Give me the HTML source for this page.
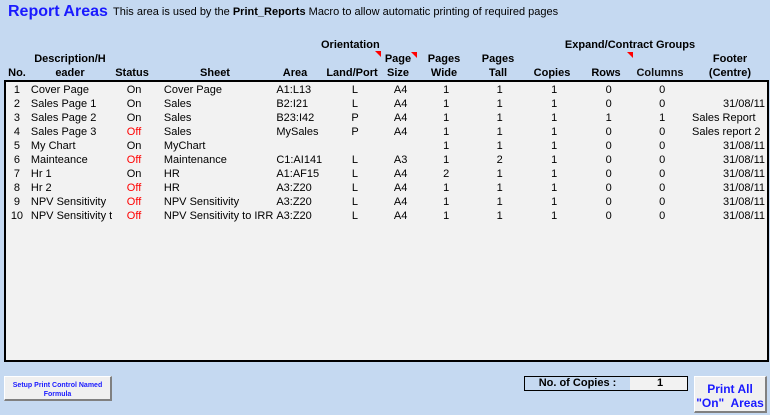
<!DOCTYPE html>
<html><head><style>
body{margin:0;width:770px;height:415px;background:#c5d9f1;font-family:"Liberation Sans",Arial,sans-serif;position:relative;overflow:hidden;font-size:11px;color:#000}
.a{position:absolute;white-space:nowrap}
.h{font-weight:bold;font-size:11px;text-align:center;line-height:14px}
.box{position:absolute;left:4px;top:80px;width:761px;height:278px;border:2px solid #000;background:#f2f2f2}
table{position:absolute;left:0px;top:1px;border-collapse:collapse;table-layout:fixed}
td{height:14px;padding:0;line-height:14px;font-size:11px;white-space:nowrap;overflow:hidden}
.c{text-align:center}.l{padding-left:3px}.r{text-align:right;padding-right:2px}
.off{color:#ff0000}
.tri{position:absolute;width:0;height:0;border-left:6px solid transparent;border-top:6px solid #f00}
.btn{position:absolute;background:#f0f0f0;border:1px solid #fff;border-right:2px solid #808080;border-bottom:2px solid #808080;color:#1a1aff;font-weight:bold;text-align:center}
</style></head><body>
<div class="a" style="left:8px;top:3px;font-size:16px;font-weight:bold;color:#1a1aff">Report Areas</div>
<div class="a" style="left:113px;top:6px;font-size:11px">This area is used by the <b>Print_Reports</b> Macro to allow automatic printing of required pages</div>

<div class="a h" style="left:321px;top:38px">Orientation</div>
<div class="tri" style="left:375px;top:51px"></div>
<div class="a h" style="left:555px;top:38px;width:150px">Expand/Contract Groups</div>
<div class="tri" style="left:627px;top:52px"></div>
<div class="a h" style="left:8px;top:66px;width:18px">No.</div>
<div class="a h" style="left:30px;top:52px;width:80px">Description/H<br>eader</div>
<div class="a h" style="left:111px;top:66px;width:42px">Status</div>
<div class="a h" style="left:190px;top:66px;width:50px">Sheet</div>
<div class="a h" style="left:280px;top:66px;width:30px">Area</div>
<div class="a h" style="left:322px;top:66px;width:60px">Land/Port</div>
<div class="a h" style="left:380px;top:52px;width:36px">Page<br>Size</div>
<div class="tri" style="left:411px;top:52px"></div>
<div class="a h" style="left:420px;top:52px;width:48px">Pages<br>Wide</div>
<div class="a h" style="left:474px;top:52px;width:48px">Pages<br>Tall</div>
<div class="a h" style="left:528px;top:66px;width:48px">Copies</div>
<div class="a h" style="left:582px;top:66px;width:48px">Rows</div>
<div class="a h" style="left:633px;top:66px;width:54px;color:#111">Columns</div>
<div class="a h" style="left:690px;top:52px;width:80px">Footer<br>(Centre)</div>

<div class="box">
<table>
<colgroup><col style="width:22px"><col style="width:80px"><col style="width:44px"><col style="width:116px"><col style="width:58px"><col style="width:48px"><col style="width:44px"><col style="width:48px"><col style="width:60px"><col style="width:50px"><col style="width:60px"><col style="width:48px"><col style="width:81px"></colgroup>
<tr><td class="c">1</td><td class="l">Cover Page</td><td class="c">On</td><td style="padding-left:8px">Cover Page</td><td class="l">A1:L13</td><td class="c">L</td><td class="c">A4</td><td class="c">1</td><td class="c">1</td><td class="c">1</td><td class="c">0</td><td class="c">0</td><td class="r"></td></tr>
<tr><td class="c">2</td><td class="l">Sales Page 1</td><td class="c">On</td><td style="padding-left:8px">Sales</td><td class="l">B2:I21</td><td class="c">L</td><td class="c">A4</td><td class="c">1</td><td class="c">1</td><td class="c">1</td><td class="c">0</td><td class="c">0</td><td class="r">31/08/11</td></tr>
<tr><td class="c">3</td><td class="l">Sales Page 2</td><td class="c">On</td><td style="padding-left:8px">Sales</td><td class="l">B23:I42</td><td class="c">P</td><td class="c">A4</td><td class="c">1</td><td class="c">1</td><td class="c">1</td><td class="c">1</td><td class="c">1</td><td style="padding-left:6px">Sales Report</td></tr>
<tr><td class="c">4</td><td class="l">Sales Page 3</td><td class="c off">Off</td><td style="padding-left:8px">Sales</td><td class="l">MySales</td><td class="c">P</td><td class="c">A4</td><td class="c">1</td><td class="c">1</td><td class="c">1</td><td class="c">0</td><td class="c">0</td><td style="padding-left:6px">Sales report 2</td></tr>
<tr><td class="c">5</td><td class="l">My Chart</td><td class="c">On</td><td style="padding-left:8px">MyChart</td><td class="l"></td><td class="c"></td><td class="c"></td><td class="c">1</td><td class="c">1</td><td class="c">1</td><td class="c">0</td><td class="c">0</td><td class="r">31/08/11</td></tr>
<tr><td class="c">6</td><td class="l">Mainteance</td><td class="c off">Off</td><td style="padding-left:8px">Maintenance</td><td class="l">C1:AI141</td><td class="c">L</td><td class="c">A3</td><td class="c">1</td><td class="c">2</td><td class="c">1</td><td class="c">0</td><td class="c">0</td><td class="r">31/08/11</td></tr>
<tr><td class="c">7</td><td class="l">Hr 1</td><td class="c">On</td><td style="padding-left:8px">HR</td><td class="l">A1:AF15</td><td class="c">L</td><td class="c">A4</td><td class="c">2</td><td class="c">1</td><td class="c">1</td><td class="c">0</td><td class="c">0</td><td class="r">31/08/11</td></tr>
<tr><td class="c">8</td><td class="l">Hr 2</td><td class="c off">Off</td><td style="padding-left:8px">HR</td><td class="l">A3:Z20</td><td class="c">L</td><td class="c">A4</td><td class="c">1</td><td class="c">1</td><td class="c">1</td><td class="c">0</td><td class="c">0</td><td class="r">31/08/11</td></tr>
<tr><td class="c">9</td><td class="l">NPV Sensitivity</td><td class="c off">Off</td><td style="padding-left:8px">NPV Sensitivity</td><td class="l">A3:Z20</td><td class="c">L</td><td class="c">A4</td><td class="c">1</td><td class="c">1</td><td class="c">1</td><td class="c">0</td><td class="c">0</td><td class="r">31/08/11</td></tr>
<tr><td class="c">10</td><td class="l">NPV Sensitivity t</td><td class="c off">Off</td><td style="padding-left:8px">NPV Sensitivity to IRR</td><td class="l">A3:Z20</td><td class="c">L</td><td class="c">A4</td><td class="c">1</td><td class="c">1</td><td class="c">1</td><td class="c">0</td><td class="c">0</td><td class="r">31/08/11</td></tr>
</table>
</div>

<div class="btn" style="left:4px;top:376px;width:108px;height:25px;font-size:7px;line-height:9px;padding-top:4px;box-sizing:border-box">Setup Print Control Named<br>Formula</div>
<div class="a" style="left:524px;top:376px;width:162px;height:13px;border:1px solid #000;background:#f2f2f2;font-weight:bold;font-size:11px;line-height:13px">
<span style="position:absolute;left:0;top:0;width:105px;height:13px;background:#c5d9f1;text-align:center">No. of Copies :</span>
<span style="position:absolute;left:132px">1</span></div>
<div class="btn" style="left:694px;top:376px;width:73px;height:37px;font-size:12px;line-height:14px;padding-top:5px;box-sizing:border-box">Print All<br>"On"&nbsp; Areas</div>
</body></html>
